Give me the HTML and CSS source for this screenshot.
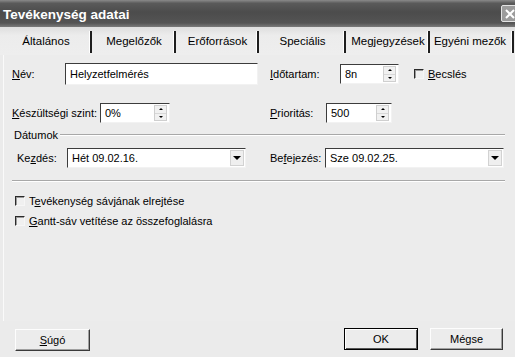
FILE: index.html
```html
<!DOCTYPE html>
<html lang="hu">
<head>
<meta charset="utf-8">
<title>Tevékenység adatai</title>
<link rel="stylesheet" href="styles.css">
</head>
<body>
<div class="window">
  <div class="titlebar">
    <span class="title">Tevékenység adatai</span>
    <span class="close"><svg width="12" height="12" viewBox="0 0 12 12"><path d="M2 2 L10 10 M10 2 L2 10" stroke="#fff" stroke-width="2" fill="none"/></svg></span>
  </div>
  <div class="tabs">
    <div class="tab t1">Általános</div>
    <div class="tab t2">Megelőzők</div>
    <div class="tab t3">Erőforrások</div>
    <div class="tab t4">Speciális</div>
    <div class="tab t5">Megjegyzések</div>
    <div class="tab t6">Egyéni mezők</div>
  </div>
  <div class="panel">
    <div class="row r1">
      <div class="cell">
        <span class="lbl w53"><u>N</u>év:</span>
        <div class="field w193 h22"><span class="val">Helyzetfelmérés</span></div>
      </div>
      <div class="cell">
        <span class="lbl w70"><u>I</u>dőtartam:</span>
        <div class="field w59 h20"><span class="val">8n</span><span class="spin"><i class="up"></i><i class="dn"></i></span></div>
        <span class="chk ml15"></span><span class="chklbl"><u>B</u>ecslés</span>
      </div>
    </div>
    <div class="row r2">
      <div class="cell">
        <span class="lbl w88"><u>K</u>észültségi szint:</span>
        <div class="field w70 h20"><span class="val">0%</span><span class="spin"><i class="up"></i><i class="dn"></i></span></div>
      </div>
      <div class="cell">
        <span class="lbl w56"><u>P</u>rioritás:</span>
        <div class="field w66 h20"><span class="val">500</span><span class="spin"><i class="up"></i><i class="dn"></i></span></div>
      </div>
    </div>
    <div class="group">
      <span class="glbl">Dátumok</span><span class="gline"></span>
    </div>
    <div class="row r3">
      <div class="cell pl5">
        <span class="lbl w50">Ke<u>z</u>dés:</span>
        <div class="field w179 h20"><span class="val">Hét 09.02.16.</span><span class="drop"><i></i></span></div>
      </div>
      <div class="cell">
        <span class="lbl w55">Be<u>f</u>ejezés:</span>
        <div class="field w179 h20"><span class="val">Sze 09.02.25.</span><span class="drop"><i></i></span></div>
      </div>
    </div>
    <div class="sep"></div>
    <div class="checkrow"><span class="chk"></span><span class="chklbl">T<u>e</u>vékenység sávjának elrejtése</span></div>
    <div class="checkrow"><span class="chk"></span><span class="chklbl"><u>G</u>antt-sáv vetítése az összefoglalásra</span></div>
  </div>
  <div class="buttons">
    <button class="btn help"><u>S</u>úgó</button>
    <span class="spacer"></span>
    <button class="btn ok">OK</button>
    <button class="btn cancel">Mégse</button>
  </div>
</div>
</body>
</html>
```
FILE: styles.css
```css
* { box-sizing: border-box; }
html, body { margin: 0; padding: 0; }
body {
  font-family: "Liberation Sans", Arial, sans-serif;
  font-size: 11px;
  color: #000;
  background: #ebebeb;
}
.window {
  width: 515px;
  height: 357px;
  display: flex;
  flex-direction: column;
  background: #ebebeb;
  overflow: hidden;
}
.titlebar {
  height: 27px;
  flex: none;
  display: flex;
  align-items: center;
  padding-left: 3px;
  background: linear-gradient(to bottom, #8a8a8a 0, #5a5a5a 12%, #4c4c4c 45%, #545454 85%, #7a7a7a 100%);
}
.title {
  color: #fff;
  font-weight: bold;
  font-size: 13.5px;
  flex: 1;
  padding-top: 1px;
}
.close {
  width: 17px;
  height: 17px;
  margin-right: -3px;
  border: 1px solid #e4e4e4;
  border-radius: 2px;
  background: #9c9c9c;
  display: flex;
  align-items: center;
  justify-content: center;
}
.tabs {
  height: 28px;
  flex: none;
  display: flex;
  background: linear-gradient(to bottom, #dedede 0, #ececec 30%, #eeeeee 100%);
}
.tab {
  position: relative;
  display: flex;
  align-items: center;
  justify-content: center;
  font-size: 11.5px;
}
.tab::after {
  content: "";
  position: absolute;
  right: 0;
  top: 4px;
  bottom: 2px;
  width: 2px;
  background: #1e1e1e;
  box-shadow: -1px 0 0 #fff;
}
.t1 { width: 92px; }
.t2 { width: 84px; }
.t3 { width: 83px; }
.t4 { width: 87px; }
.t5 { width: 84px; }
.t6 { width: 84px; padding-right: 4px; }
.panel {
  flex: 1;
  padding: 8px 10px 0 8px;
  margin-left: 3px;
  display: flex;
  flex-direction: column;
  border-left: 1px solid #fafafa;
  background: #ececec;
}
.row {
  display: grid;
  grid-template-columns: 258px 1fr;
  align-items: center;
}
.r2 { margin-top: 18px; }
.r3 { margin-top: 6px; }
.cell {
  display: flex;
  align-items: center;
}
.pl5 { padding-left: 5px; }
.lbl { flex: none; }
.w50 { width: 50px; }
.w53 { width: 53px; }
.w55 { width: 55px; }
.w56 { width: 56px; }
.w70 { width: 70px; }
.w88 { width: 88px; }
.w59 { width: 59px; }
.w66 { width: 66px; }
.w70.field { width: 70px; }
.w179 { width: 179px; }
.w193 { width: 193px; }
.h20 { height: 20px; }
.h22 { height: 22px; }
.field {
  flex: none;
  display: flex;
  align-items: center;
  background: #fff;
  border: 1px solid;
  border-color: #3c3c3c #f2f2f2 #f2f2f2 #3c3c3c;
  padding-left: 4px;
}
.val { flex: 1; white-space: nowrap; overflow: hidden; }
.spin {
  width: 13px;
  height: 16px;
  margin-right: 2px;
  display: flex;
  flex-direction: column;
  border: 1px solid #cfcfcf;
  background: #f1f1f1;
}
.spin i {
  flex: 1;
  display: flex;
  align-items: center;
  justify-content: center;
}
.spin i::before {
  content: "";
  border-left: 2px solid transparent;
  border-right: 2px solid transparent;
}
.spin .up { border-bottom: 1px solid #d8d8d8; }
.spin .up::before { border-bottom: 2px solid #000; }
.spin .dn::before { border-top: 2px solid #000; }
.drop {
  width: 14px;
  height: 16px;
  margin-right: 1px;
  background: #efefef;
  border: 1px solid #d2d2d2;
  display: flex;
  align-items: center;
  justify-content: center;
}
.drop i {
  border-left: 4px solid transparent;
  border-right: 4px solid transparent;
  border-top: 4px solid #000;
}
.chk {
  flex: none;
  width: 10px;
  height: 10px;
  border: 1px solid;
  border-color: #2a2a2a #f6f6f6 #f6f6f6 #2a2a2a;
  box-shadow: inset 1px 1px 0 #9a9a9a;
  background: #f0f0f0;
}
.ml15 { margin-left: 15px; }
.chklbl { margin-left: 4px; white-space: nowrap; }
.group {
  display: flex;
  align-items: center;
  margin-top: 5px;
  height: 14px;
  padding-left: 2px;
}
.glbl { flex: none; margin-right: 2px; }
.gline {
  flex: 1;
  height: 2px;
  border-top: 1px solid #a8a8a8;
  border-bottom: 1px solid #fff;
}
.sep {
  margin-top: 12px;
  height: 2px;
  border-top: 1px solid #a8a8a8;
  border-bottom: 1px solid #fff;
}
.checkrow {
  display: flex;
  align-items: center;
  height: 20px;
  padding-left: 3px;
}
.sep + .checkrow { margin-top: 9px; }
.buttons {
  height: 36px;
  flex: none;
  display: flex;
  align-items: flex-start;
  padding: 7px 12px 0 15px;
  background: #ebebeb;
}
.spacer { flex: 1; }
.btn {
  font: inherit;
  color: #000;
  height: 22px;
  background: #ececec;
  border: 1px solid;
  border-color: #fdfdfd #3a3a3a #3a3a3a #fdfdfd;
  box-shadow: inset -1px -1px 0 #a0a0a0;
  padding: 0;
}
.help { width: 75px; margin-top: 1px; }
.ok {
  width: 74px;
  border: 1px solid #000;
  box-shadow: inset 1px 1px 0 #fff, inset -1px -1px 0 #555;
}
.cancel { width: 73px; margin-left: 12px; }
```
